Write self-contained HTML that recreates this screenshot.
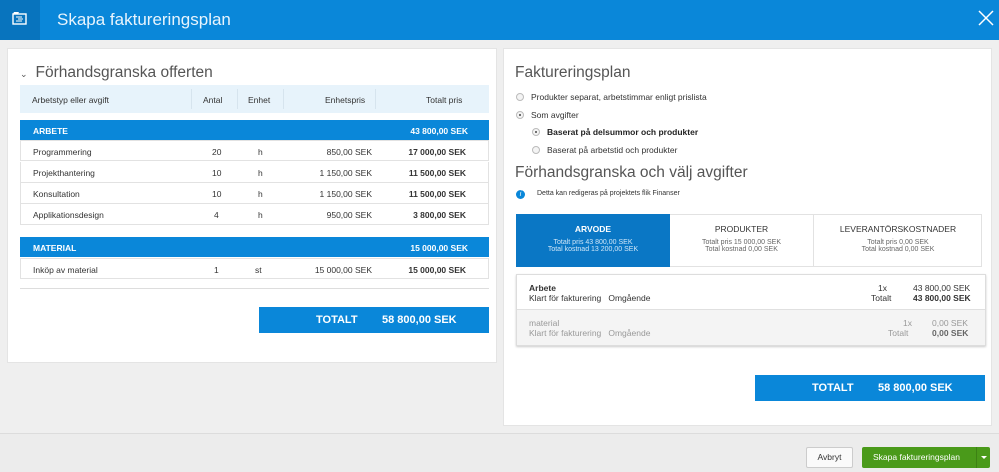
<!DOCTYPE html><html><head><meta charset="utf-8"><style>
*{box-sizing:border-box;margin:0;padding:0}
body{width:999px;height:472px;overflow:hidden;background:#efefef;font-family:"Liberation Sans",sans-serif;color:#333;position:relative;font-size:9px}
.a{position:absolute}
.hdr{left:0;top:0;width:999px;height:40px;background:#0a87d9}
.ico{left:0;top:0;width:40px;height:40px;background:#0874be}
.panel{background:#fff;border:1px solid #e4e4e4}
.row{position:absolute;left:20px;width:469px;height:21px;border:1px solid #e2e2e2;border-top:none;font-size:8.5px}
.row span{position:absolute;top:6px}
.grp{position:absolute;left:20px;width:469px;height:20px;background:#0a87d9;color:#fff;font-weight:bold;font-size:8.5px}
.grp span{position:absolute;top:6px}
.rad{position:absolute;width:8px;height:8px;border-radius:50%;border:1px solid #bbb;background:#f4f4f4}
.rad.on::after{content:"";position:absolute;left:2px;top:2px;width:2px;height:2px;border-radius:50%;background:#444}
.t{position:absolute;font-size:8.5px}
.h{position:absolute;font-size:8.5px;top:10px}
.sep{position:absolute;top:4px;width:1px;height:20px;background:#d6e4ee}
.ttl{color:#555;font-size:15.5px}
</style></head><body>
<div class="a hdr"></div>
<div class="a ico"><svg width="40" height="40"><rect x="13" y="14" width="13" height="10" fill="none" stroke="#fff" stroke-width="1.4"/><path d="M13 14h5l1 -2h-5z" fill="#fff"/><path d="M16 17h6M18 19h5M16 21h6" stroke="#fff" stroke-width="1"/></svg></div>
<div class="a" style="left:57px;top:10px;font-size:17px;color:#e8f4fd">Skapa faktureringsplan</div>
<svg class="a" style="left:978px;top:10px" width="16" height="16"><path d="M1 1L15 15M15 1L1 15" stroke="#fff" stroke-width="1.5"/></svg>

<div class="a panel" style="left:7px;top:48px;width:490px;height:315px"></div>
<div class="a ttl" style="left:20px;top:64px"><span style="font-size:9px;margin-right:8px">⌄</span>Förhandsgranska offerten</div>
<div class="a" style="left:20px;top:85px;width:469px;height:28px;background:#e7f3fb">
<span class="h" style="left:12px">Arbetstyp eller avgift</span>
<span class="sep" style="left:171px"></span>
<span class="h" style="left:183px">Antal</span>
<span class="sep" style="left:217px"></span>
<span class="h" style="left:228px">Enhet</span>
<span class="sep" style="left:263px"></span>
<span class="h" style="left:305px">Enhetspris</span>
<span class="sep" style="left:355px"></span>
<span class="h" style="left:406px">Totalt pris</span>
</div>
<div class="grp" style="top:120px"><span style="left:13px">ARBETE</span><span style="right:21px">43 800,00 SEK</span></div>
<div class="row" style="top:140px;border-top:1px solid #e2e2e2"><span style="left:191px">20</span><span style="left:237px">h</span><span style="right:116px">850,00 SEK</span><span style="right:22px;font-weight:bold">17 000,00 SEK</span><span style="left:12px">Programmering</span></div>
<div class="row" style="top:162px"><span style="left:12px">Projekthantering</span><span style="left:191px">10</span><span style="left:237px">h</span><span style="right:116px">1 150,00 SEK</span><span style="right:22px;font-weight:bold">11 500,00 SEK</span></div>
<div class="row" style="top:183px"><span style="left:12px">Konsultation</span><span style="left:191px">10</span><span style="left:237px">h</span><span style="right:116px">1 150,00 SEK</span><span style="right:22px;font-weight:bold">11 500,00 SEK</span></div>
<div class="row" style="top:204px"><span style="left:12px">Applikationsdesign</span><span style="left:193px">4</span><span style="left:237px">h</span><span style="right:116px">950,00 SEK</span><span style="right:22px;font-weight:bold">3 800,00 SEK</span></div>
<div class="grp" style="top:237px"><span style="left:13px">MATERIAL</span><span style="right:21px">15 000,00 SEK</span></div>
<div class="row" style="top:258px;border-top:1px solid #e2e2e2"><span style="left:12px">Inköp av material</span><span style="left:193px">1</span><span style="left:234px">st</span><span style="right:116px">15 000,00 SEK</span><span style="right:22px;font-weight:bold">15 000,00 SEK</span></div>
<div class="a" style="left:20px;top:288px;width:469px;height:1px;background:#ddd"></div>
<div class="a" style="left:259px;top:307px;width:230px;height:26px;background:#0a87d9;color:#fff;font-weight:bold;font-size:11px"><span class="a" style="left:57px;top:7px">TOTALT</span><span class="a" style="left:123px;top:7px">58 800,00 SEK</span></div>

<div class="a panel" style="left:503px;top:48px;width:489px;height:378px"></div>
<div class="a ttl" style="left:515px;top:64px">Faktureringsplan</div>
<div class="rad" style="left:516px;top:93px"></div><div class="t" style="left:531px;top:92px">Produkter separat, arbetstimmar enligt prislista</div>
<div class="rad on" style="left:516px;top:111px"></div><div class="t" style="left:531px;top:110px">Som avgifter</div>
<div class="rad on" style="left:532px;top:128px"></div><div class="t" style="left:547px;top:127px;font-weight:bold;color:#222">Baserat på delsummor och produkter</div>
<div class="rad" style="left:532px;top:146px"></div><div class="t" style="left:547px;top:145px">Baserat på arbetstid och produkter</div>
<div class="a ttl" style="left:515px;top:164px">Förhandsgranska och välj avgifter</div>
<div class="a" style="left:516px;top:190px;width:9px;height:9px;border-radius:50%;background:#0a87d9;color:#fff;font-size:7px;text-align:center;line-height:9px;font-style:italic">i</div>
<div class="t" style="left:537px;top:190px;font-size:7px">Detta kan redigeras på projektets flik Finanser</div>
<div class="a" style="left:516px;top:214px;width:466px;height:53px;border:1px solid #e2e2e2;background:#fff"></div>
<div class="a" style="left:516px;top:214px;width:154px;height:53px;background:#0a77c5;color:#fff;text-align:center"><div style="margin-top:10px;font-weight:bold;font-size:8.5px">ARVODE</div><div style="margin-top:5px;font-size:7px;color:#cfe6f8">Totalt pris 43 800,00 SEK<br>Total kostnad 13 200,00 SEK</div></div>
<div class="a" style="left:670px;top:214px;width:144px;height:53px;text-align:center;border-right:1px solid #e2e2e2"><div style="margin-top:10px;font-size:8.5px">PRODUKTER</div><div style="margin-top:5px;font-size:7px;color:#666">Totalt pris 15 000,00 SEK<br>Total kostnad 0,00 SEK</div></div>
<div class="a" style="left:814px;top:214px;width:168px;height:53px;text-align:center"><div style="margin-top:10px;font-size:8.5px">LEVERANTÖRSKOSTNADER</div><div style="margin-top:5px;font-size:7px;color:#666">Totalt pris 0,00 SEK<br>Total kostnad 0,00 SEK</div></div>
<div class="a" style="left:516px;top:274px;width:470px;height:72px;border:1px solid #ddd;box-shadow:0 1px 2px #ccc;background:#fff"></div>
<div class="a" style="left:517px;top:309px;width:468px;height:36px;background:#f4f4f4;border-top:1px solid #e0e0e0"></div>
<div class="t" style="left:529px;top:283px;font-weight:bold">Arbete</div><div class="t" style="left:529px;top:293px">Klart för fakturering &nbsp;&nbsp;Omgående</div>
<div class="t" style="left:878px;top:283px">1x</div><div class="t" style="left:913px;top:283px">43 800,00 SEK</div>
<div class="t" style="left:871px;top:293px">Totalt</div><div class="t" style="left:913px;top:293px;font-weight:bold">43 800,00 SEK</div>
<div class="t" style="left:529px;top:318px;color:#999">material</div><div class="t" style="left:529px;top:328px;color:#999">Klart för fakturering &nbsp;&nbsp;Omgående</div>
<div class="t" style="left:903px;top:318px;color:#999">1x</div><div class="t" style="left:932px;top:318px;color:#999">0,00 SEK</div>
<div class="t" style="left:888px;top:328px;color:#999">Totalt</div><div class="t" style="left:932px;top:328px;font-weight:bold;color:#666">0,00 SEK</div>
<div class="a" style="left:755px;top:375px;width:230px;height:26px;background:#0a87d9;color:#fff;font-weight:bold;font-size:11px"><span class="a" style="left:57px;top:7px">TOTALT</span><span class="a" style="left:123px;top:7px">58 800,00 SEK</span></div>

<div class="a" style="left:0;top:433px;width:999px;height:39px;background:#ececec;border-top:1px solid #dcdcdc"></div>
<div class="a" style="left:806px;top:447px;width:47px;height:21px;background:#fafafa;border:1px solid #ccc;border-radius:2px;font-size:8.5px;text-align:center;line-height:19px">Avbryt</div>
<div class="a" style="left:862px;top:447px;width:128px;height:21px;background:#4a9a1a;border-radius:2px;color:#fff;font-size:8.5px;line-height:21px"><span style="margin-left:11px">Skapa faktureringsplan</span><span class="a" style="left:114px;top:0;width:1px;height:21px;background:#3d8214"></span><span class="a" style="left:119px;top:9px;border:3px solid transparent;border-top:3px solid #fff"></span></div>
</body></html>
